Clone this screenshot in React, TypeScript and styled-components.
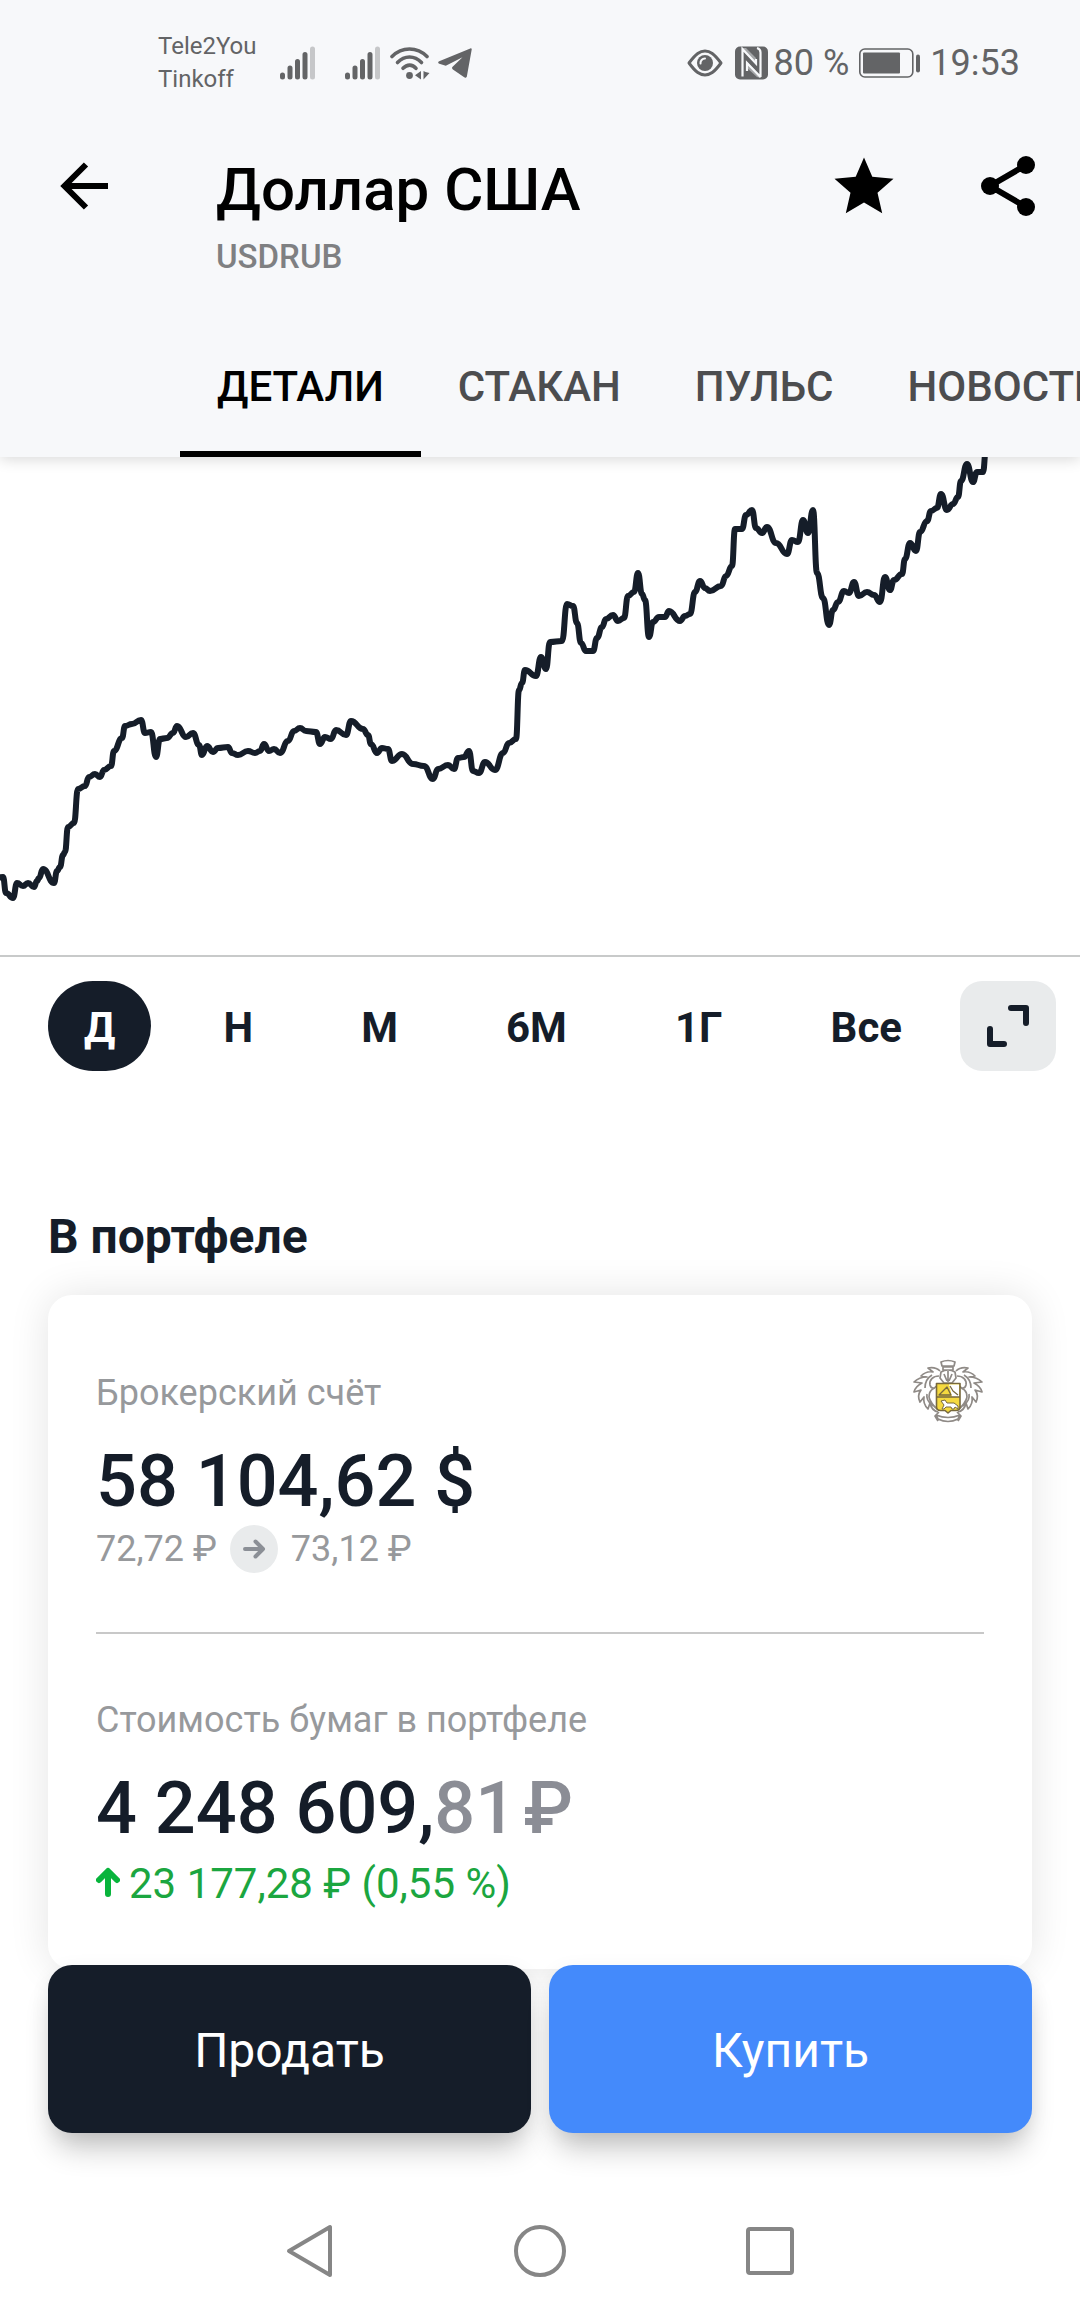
import { useState } from "react";
import styled, { createGlobalStyle } from "styled-components";

const GlobalStyle = createGlobalStyle`
  * {
    box-sizing: border-box;
  }
  body {
    margin: 0;
    background: #ffffff;
    font-family: Roboto, "Noto Sans", sans-serif;
    color: #151d29;
  }
  button {
    border: 0;
    padding: 0;
    background: none;
    font-family: inherit;
    color: inherit;
    cursor: pointer;
  }
  svg {
    display: block;
    flex-shrink: 0;
  }
`;

const Page = styled.div`
  min-height: 100vh;
  display: flex;
  flex-direction: column;
  overflow-x: hidden;
`;

const Header = styled.header`
  position: relative;
  z-index: 1;
  background: #f7f8fa;
  box-shadow: 0 2px 14px rgba(0, 0, 0, 0.16);
`;

const StatusBar = styled.div`
  height: 124px;
  padding: 2px 60px 0 158px;
  display: flex;
  align-items: center;
  justify-content: space-between;
  color: #636466;
`;

const StatusGroup = styled.div`
  display: flex;
  align-items: center;
`;

const Carrier = styled.div`
  width: 122px;
  font-size: 24px;
  line-height: 33px;
`;

const SignalIcon = styled.svg`
  margin-right: 30px;

  & + & {
    margin-right: 10px;
  }
`;

const WifiIcon = styled.svg`
  margin-right: 8px;
`;

const EyeIcon = styled.svg`
  margin-right: 12px;
`;

const NfcIcon = styled.svg`
  margin-right: 6px;
`;

const BatteryIcon = styled.svg`
  margin: 0 10px;
`;

const StatusText = styled.span`
  font-size: 36px;
  line-height: 44px;
`;

const Toolbar = styled.div`
  padding: 26px 36px 0 48px;
  display: flex;
  align-items: flex-start;
`;

const IconButton = styled.button`
  width: 72px;
  height: 72px;
`;

const TitleBlock = styled.div`
  flex: 1;
  padding: 5px 0 0 96px;
`;

const Title = styled.h1`
  margin: 0;
  font-size: 60px;
  line-height: 70px;
  font-weight: 500;
  color: #000000;
`;

const Ticker = styled.div`
  margin-top: 12px;
  font-size: 33px;
  line-height: 40px;
  font-weight: 500;
  color: #7f8082;
`;

const Actions = styled.div`
  display: flex;
  gap: 72px;
`;

const Tabs = styled.nav`
  margin-top: 36px;
  padding-left: 180px;
  display: flex;
  overflow: hidden;
`;

const Tab = styled.button<{ $active: boolean }>`
  height: 144px;
  padding: 4px 37px 0;
  flex-shrink: 0;
  font-size: 42px;
  line-height: 50px;
  font-weight: 500;
  color: ${({ $active }) => ($active ? "#000000" : "#4c4d4f")};
  box-shadow: ${({ $active }) => ($active ? "inset 0 -6px 0 #000000" : "none")};
`;

const Chart = styled.svg`
  width: 100%;
  height: auto;
`;

const PeriodBar = styled.div`
  padding: 24px 24px 0 48px;
  border-top: 2px solid #c8caca;
  display: flex;
  gap: 22px;
`;

const Periods = styled.div`
  flex: 1;
  display: flex;
  justify-content: space-between;
`;

const Period = styled.button<{ $active: boolean }>`
  height: 90px;
  padding: 4px 36px 0;
  border-radius: 45px;
  font-size: 42px;
  line-height: 50px;
  font-weight: 700;
  background: ${({ $active }) => ($active ? "#151d29" : "transparent")};
  color: ${({ $active }) => ($active ? "#ffffff" : "#151d29")};
`;

const ExpandButton = styled.button`
  width: 96px;
  height: 90px;
  border-radius: 22px;
  background: #e9ebec;
`;

const Portfolio = styled.section`
  padding: 138px 48px 0;
`;

const Heading = styled.h2`
  margin: 0 0 30px;
  font-size: 48px;
  line-height: 56px;
  font-weight: 700;
`;

const Card = styled.div`
  padding: 64px 48px 60px;
  border-radius: 24px;
  background: #ffffff;
  box-shadow: 0 0 40px rgba(0, 0, 0, 0.11);
`;

const CardRow = styled.div`
  display: flex;
  justify-content: space-between;
  align-items: flex-start;
`;

const Account = styled.div`
  padding-top: 12px;
`;

const Label = styled.div`
  margin-bottom: 25px;
  font-size: 36px;
  line-height: 44px;
  color: #97999c;
`;

const Amount = styled.div`
  font-size: 72px;
  line-height: 84px;
  font-weight: 500;
`;

const Kopecks = styled.span`
  color: #8b8d95;
`;

const Quotes = styled.div`
  height: 50px;
  display: flex;
  align-items: center;
  gap: 13px;
  font-size: 36px;
  line-height: 44px;
  color: #97999c;
`;

const Divider = styled.hr`
  margin: 58px 0 64px;
  border: 0;
  border-top: 2px solid #c8c8c8;
`;

const Profit = styled.div`
  margin-top: 8px;
  display: flex;
  align-items: center;
  gap: 9px;
  font-size: 42px;
  line-height: 50px;
  color: #1ba640;
`;

/* sits slightly over the bottom edge of the card */
const TradeBar = styled.div`
  margin-top: -4px;
  padding: 0 48px;
  display: flex;
  gap: 18px;
`;

const TradeButton = styled.button<{ $buy?: boolean }>`
  flex: 1;
  height: 168px;
  padding-top: 2px;
  border-radius: 24px;
  font-size: 48px;
  color: #ffffff;
  background: ${({ $buy }) => ($buy ? "#448afb" : "#151d29")};
  box-shadow:
    0 22px 30px -8px rgba(0, 0, 0, 0.24),
    0 4px 20px rgba(0, 0, 0, 0.06);
`;

const SystemNav = styled.nav`
  height: 118px;
  margin-top: auto;
  display: flex;
  justify-content: center;
  align-items: center;
  gap: 170px;
`;

const NavButton = styled.button`
  width: 60px;
  height: 60px;
`;

const tabs = ["ДЕТАЛИ", "СТАКАН", "ПУЛЬС", "НОВОСТИ"];
const periods = ["Д", "Н", "М", "6М", "1Г", "Все"];

const prices =
  "-4,421 3,420 6,436 13,441 17,426 23,429 28,426 34,430 37,424 39,421 43,412 54,426 57,414 60,410 63,398 65,395 68,370 74,366 78,332 85,329 89,320 95,317 100,320 104,313 111,309 114,294 122,281 125,269 132,267 141,263 145,276 151,275 156,300 160,282 167,281 173,276 177,269 186,280 193,276 199,288 202,298 207,289 213,295 218,291 228,290 232,296 238,298 248,294 255,296 260,294 264,287 269,294 274,292 280,296 288,284 294,274 300,271 306,274 316,275 320,287 325,280 331,282 336,273 346,278 351,264 363,272 368,278 371,287 377,296 382,291 388,292 392,304 402,297 413,307 424,309 433,322 438,312 448,308 454,312 458,301 464,300 469,294 473,314 479,316 485,305 495,313 503,296 509,286 516,282 519,233 522,226 525,213 536,219 541,200 546,212 550,185 562,184 567,147 573,149 577,166 581,186 586,194 593,194 597,181 602,170 606,162 613,158 618,164 624,161 628,139 634,135 638,116 642,137 645,143 649,180 653,165 659,160 665,160 669,154 680,164 685,159 690,157 695,135 700,124 705,131 710,134 721,129 726,119 732,109 735,72 742,72 746,58 752,53 756,71 762,76 767,70 776,86 787,97 792,83 798,85 803,63 808,76 813,53 817,116 823,141 829,168 833,153 838,145 844,134 849,136 854,125 859,139 867,135 874,138 880,145 885,120 890,133 894,123 902,117 905,102 910,86 916,94 920,75 927,64 931,54 937,51 941,37 947,53 953,47 958,40 961,24 967,7 973,25 977,15 983,15 986,-8";

// joins the points with curves that leave and enter each point horizontally
function smoothPath(points: string) {
  const list = points.split(" ").map((p) => p.split(",").map(Number));
  return list
    .map(([x, y], i) => {
      if (i === 0) return `M${x} ${y}`;
      const [px, py] = list[i - 1];
      const mid = (px + x) / 2;
      return `C${mid} ${py} ${mid} ${y} ${x} ${y}`;
    })
    .join("");
}

function Signal() {
  return (
    <SignalIcon width="35" height="34" viewBox="0 0 35 34" strokeWidth="5" strokeLinecap="round">
      <path
        d="M2.5 29v2M10 22v9M17.5 15.500v15.500M25 8.500v22.500"
        stroke="currentColor"
      />
      <path d="M32.500 3v28" stroke="#c6c7c9" />
    </SignalIcon>
  );
}

function Wifi() {
  return (
    <WifiIcon width="40" height="34" viewBox="0 0 40 34" fill="none">
      <g stroke="currentColor" strokeWidth="3.600" strokeLinecap="round">
        <path d="M2 10.500C12 .5 27 .5 37 10.500" />
        <path d="M7.500 16.500c7-7.300 17-7.300 24 0" />
        <path d="M13 22.300c4-4.300 9.500-4.300 13 0" />
      </g>
      <circle cx="19.500" cy="29.500" r="3.400" fill="currentColor" />
      <path d="M31 25v8.500l-6-4.200zM33.500 25v8.500l6-6.500-4-1z" fill="currentColor" />
    </WifiIcon>
  );
}

function Telegram() {
  return (
    <svg width="34" height="30" viewBox="0 0 34 30">
      <path
        d="M32.300.4 1.200 13.300c-1.400.6-1.400 2 .1 2.500l6.500 2L24.500 9.200 14.600 18.700c-.9.900-.6 2 .3 2.700l11.300 7.900c1.200.8 2.400.3 2.700-1.100L33.700 1.600c.2-1-.5-1.600-1.400-1.200z"
        fill="currentColor"
      />
    </svg>
  );
}

function Eye() {
  return (
    <EyeIcon width="36" height="28" viewBox="0 0 36 28">
      <path
        d="M2 14C9 4.500 13 2 18 2s9 2.500 16 12c-7 9.500-11 12-16 12S9 23.500 2 14z"
        fill="none"
        stroke="currentColor"
        strokeWidth="3"
        strokeLinejoin="round"
      />
      <circle cx="18" cy="14" r="8" fill="currentColor" />
      <path d="M13.500 14.500a4.500 4.500 0 0 1 4.500-5" fill="none" stroke="#f7f8fa" strokeWidth="2" strokeLinecap="round" />
    </EyeIcon>
  );
}

function Nfc() {
  return (
    <NfcIcon width="33" height="34" viewBox="0 0 33 34">
      <rect y=".5" width="33" height="33" rx="5" fill="currentColor" />
      <path
        d="M7.500 30.500V3L21 17.500V13M25.500 31V6.500Q25.500 3 22 2M25.500 31 12 17v8"
        fill="none"
        stroke="#f7f8fa"
        strokeWidth="2.200"
      />
      <path d="M7 2h4l10 10v6L7 4zM12 16l14 14v2l-4-1-10-9z" fill="#f7f8fa" fillOpacity=".45" />
    </NfcIcon>
  );
}

function Battery() {
  return (
    <BatteryIcon width="61" height="30" viewBox="0 0 61 30">
      <rect x=".8" y="1" width="53" height="28" rx="5" fill="none" stroke="currentColor" strokeWidth="1.600" />
      <rect x="4" y="4.500" width="37" height="21" rx="1" fill="currentColor" />
      <rect x="57" y="6.500" width="4" height="18" rx="2" fill="currentColor" />
    </BatteryIcon>
  );
}

function Crest() {
  return (
    <svg width="72" height="64" viewBox="0 0 72 64" fill="none" strokeLinejoin="round">
      <g stroke="#8f8a86" strokeWidth="1.700">
        <path d="M29 3q7-3 14 0l-1 4H30zM31 8h10v3H31zM29 13q7-4 14 0l1 6-4 5h-8l-4-5z" />
        <path d="M36 12v11M32 15l3 7M40 15l-3 7" />
        <path d="M28 12c-3-3-7-4-12-3l5 4c-5-1-9 1-12 4l6 1C9 18 5 20 2 23l8 1c-4 2-7 5-8 9l7-2c-3 4-3 8-1 12l4-5c-1 5 1 9 4 12l2-6c1 5 4 8 8 9" />
        <path d="M44 12c3-3 7-4 12-3l-5 4c5-1 9 1 12 4l-6 1c6 0 10 2 13 5l-8 1c4 2 7 5 8 9l-7-2c3 4 3 8 1 12l-4-5c1 5-1 9-4 12l-2-6c-1 5-4 8-8 9" />
        <path d="M27 17c-6 0-10 4-9 9 1 4 5 4 6 1M23 29c-6 2-7 8-5 12s5 8 9 10M20 16c-5 3-7 8-7 13M15 35c-1 5 2 9 6 12" />
        <path d="M45 17c6 0 10 4 9 9-1 4-5 4-6 1M49 29c6 2 7 8 5 12s-5 8-9 10M52 16c5 3 7 8 7 13M57 35c1 5-2 9-6 12" />
        <path d="M24 56q12 5 24 0l-2 4q-10 5-20 0zM27 53l-4 4 3 5M45 53l4 4-3 5" />
      </g>
      <path
        d="M24.500 24.500h23.500v23q0 4-4 4h-5L36 54l-3-2.500h-4.500q-4 0-4-4z"
        fill="#f5d93f"
        stroke="#77683d"
        strokeWidth="1.600"
      />
      <path d="M37 25.500h10v12.500h-7z" fill="#ffffff" />
      <path d="M25 38h23M27 36l8-8 4 8zM38 27l3 5 5 4" stroke="#77683d" strokeWidth="1.300" />
      <path d="M29 42l4-1 2 3h7l4 3v3l-3-2-1 2h-2l-1-2h-5l-2 2h-2l2-4z" fill="#ffffff" stroke="#77683d" />
    </svg>
  );
}

export default function App() {
  const [tab, setTab] = useState(tabs[0]);
  const [period, setPeriod] = useState(periods[0]);

  return (
    <Page>
      <GlobalStyle />
      <Header>
        <StatusBar>
          <StatusGroup>
            <Carrier>
              <div>Tele2You</div>
              <div>Tinkoff</div>
            </Carrier>
            <Signal />
            <Signal />
            <Wifi />
            <Telegram />
          </StatusGroup>
          <StatusGroup>
            <Eye />
            <Nfc />
            <StatusText>80 %</StatusText>
            <Battery />
            <StatusText>19:53</StatusText>
          </StatusGroup>
        </StatusBar>
        <Toolbar>
          <IconButton aria-label="Назад">
            <svg width="72" height="72" viewBox="0 0 72 72" fill="none" stroke="#000000" strokeWidth="6">
              <path d="M60 36H16M38 14.500 16.500 36 38 57.500" />
            </svg>
          </IconButton>
          <TitleBlock>
            <Title>Доллар США</Title>
            <Ticker>USDRUB</Ticker>
          </TitleBlock>
          <Actions>
            <IconButton aria-label="В избранное">
              <svg width="72" height="72" viewBox="0 0 72 72">
                <path d="M36 7.500l8.300 19.300 21.200 1.900-16 14 4.700 20.600L36 52.500 17.800 63.300l4.700-20.600-16-14 21.200-1.900z" />
              </svg>
            </IconButton>
            <IconButton aria-label="Поделиться">
              <svg width="72" height="72" viewBox="0 0 72 72">
                <path d="M54 15 18 36l36 21" fill="none" stroke="#000000" strokeWidth="6" />
                <circle cx="54" cy="15" r="9" />
                <circle cx="18" cy="36" r="9" />
                <circle cx="54" cy="57" r="9" />
              </svg>
            </IconButton>
          </Actions>
        </Toolbar>
        <Tabs>
          {tabs.map((name) => (
            <Tab key={name} $active={name === tab} onClick={() => setTab(name)}>
              {name}
            </Tab>
          ))}
        </Tabs>
      </Header>

      <Chart viewBox="0 0 1080 498">
        <path
          d={smoothPath(prices)}
          fill="none"
          stroke="#151d29"
          strokeWidth="6"
          strokeLinejoin="round"
          strokeLinecap="round"
        />
      </Chart>

      <PeriodBar>
        <Periods>
          {periods.map((name) => (
            <Period key={name} $active={name === period} onClick={() => setPeriod(name)}>
              {name}
            </Period>
          ))}
        </Periods>
        <ExpandButton aria-label="На весь экран">
          <svg
            width="96"
            height="90"
            viewBox="0 0 96 90"
            fill="none"
            stroke="#151d29"
            strokeWidth="6"
            strokeLinecap="round"
            strokeLinejoin="round"
          >
            <path d="M51 27h15v15M30 48v15h14" />
          </svg>
        </ExpandButton>
      </PeriodBar>

      <Portfolio>
        <Heading>В портфеле</Heading>
        <Card>
          <CardRow>
            <Account>
              <Label>Брокерский счёт</Label>
              <Amount>58 104,62 $</Amount>
              <Quotes>
                <span>72,72 ₽</span>
                <svg width="48" height="48" viewBox="0 0 48 48" fill="none">
                  <circle cx="24" cy="24" r="24" fill="#e9ebec" />
                  <path
                    d="M15 24h18M25.500 16.500 33 24l-7.500 7.500"
                    stroke="#8b8f96"
                    strokeWidth="4"
                    strokeLinecap="round"
                    strokeLinejoin="round"
                  />
                </svg>
                <span>73,12 ₽</span>
              </Quotes>
            </Account>
            <Crest />
          </CardRow>
          <Divider />
          <Label>Стоимость бумаг в портфеле</Label>
          <Amount>
            4 248 609,<Kopecks>81&#8202;₽</Kopecks>
          </Amount>
          <Profit>
            <svg
              width="24"
              height="34"
              viewBox="0 0 24 34"
              fill="none"
              stroke="#08b43c"
              strokeWidth="6"
              strokeLinecap="round"
              strokeLinejoin="round"
            >
              <path d="M12 27V5M3 13l9-9 9 9" />
            </svg>
            <span>23 177,28 ₽ (0,55 %)</span>
          </Profit>
        </Card>
      </Portfolio>

      <TradeBar>
        <TradeButton>Продать</TradeButton>
        <TradeButton $buy>Купить</TradeButton>
      </TradeBar>

      <SystemNav>
        <NavButton aria-label="Назад">
          <svg width="60" height="60" viewBox="0 0 60 60" fill="none" stroke="#868686" strokeWidth="4" strokeLinejoin="round">
            <path d="M50 6v48L9 30z" />
          </svg>
        </NavButton>
        <NavButton aria-label="Домой">
          <svg width="60" height="60" viewBox="0 0 60 60" fill="none" stroke="#868686" strokeWidth="4">
            <circle cx="30" cy="30" r="24" />
          </svg>
        </NavButton>
        <NavButton aria-label="Недавние">
          <svg width="60" height="60" viewBox="0 0 60 60" fill="none" stroke="#868686" strokeWidth="4">
            <rect x="8" y="8" width="44" height="44" rx="2" />
          </svg>
        </NavButton>
      </SystemNav>
    </Page>
  );
}
